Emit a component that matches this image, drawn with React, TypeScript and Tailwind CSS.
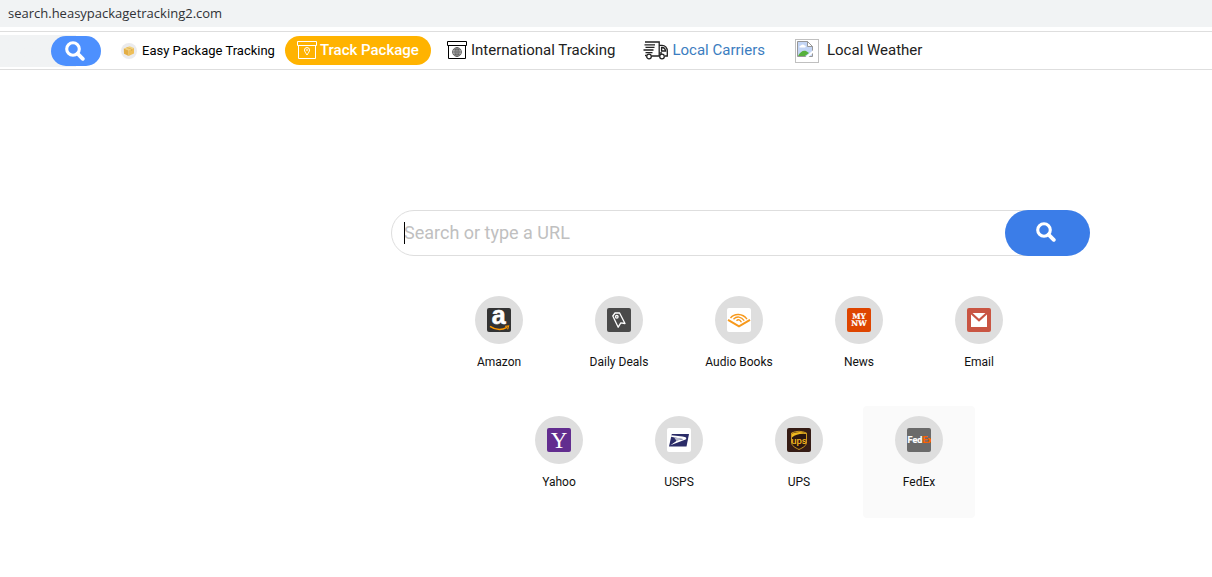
import type { ReactNode } from "react";

function SearchIcon() {
  return (
    <svg viewBox="0 0 20 20" width="20" height="20" fill="none" stroke="#fff" aria-hidden="true">
      <circle cx="8" cy="8" r="6.3" strokeWidth="3.1" />
      <path d="M12.6 12.6 L17.8 17.8" strokeWidth="3.8" strokeLinecap="round" />
    </svg>
  );
}

function BoxLogo() {
  return (
    <svg viewBox="0 0 16 16" width="16" height="16" aria-hidden="true">
      <circle cx="8" cy="8" r="8" fill="#ebebed" />
      <path d="M2.8 5.6 L8.6 3.2 L13 5 L7.6 7.4 Z" fill="#f3d27b" />
      <path d="M2.8 5.6 L7.6 7.4 V13 L3 10.8 Z" fill="#e3ae45" />
      <path d="M7.6 7.4 L13 5 V10.4 L7.6 13 Z" fill="#eebf59" />
      <path d="M5.6 4.5 L10.6 6.2 V8" stroke="#d9ab50" strokeWidth="0.7" fill="none" />
    </svg>
  );
}

function PinBox() {
  return (
    <svg viewBox="0 0 20 20" width="20" height="20" fill="none" stroke="#fff" aria-hidden="true">
      <path d="M0.5 0.5 H19.5 V4.5 H0.5 Z M1.5 4.5 V17.5 H18.5 V4.5" />
      <path d="M10 14 C8.6 11.6 7.5 10.6 7.5 9 A2.5 2.5 0 0 1 12.5 9 C12.5 10.6 11.4 11.6 10 14 Z" />
      <circle cx="10" cy="9" r="0.5" />
    </svg>
  );
}

function GlobeBox() {
  return (
    <svg viewBox="0 0 20 20" width="20" height="20" fill="none" stroke="#000" aria-hidden="true">
      <path d="M0.5 0.5 H19.5 V4.5 H0.5 Z M1.5 4.5 V17.5 H18.5 V4.5" />
      <g stroke="#555" strokeWidth="0.8">
        <circle cx="10" cy="11" r="4.5" fill="#ccc" />
        <ellipse cx="10" cy="11" rx="2" ry="4.5" />
        <path d="M10 6.5 V15.5 M5.5 11 H14.5 M6.2 8.8 H13.8 M6.2 13.2 H13.8" />
      </g>
    </svg>
  );
}

function Truck() {
  return (
    <svg viewBox="0 0 26 20" width="26" height="20" fill="none" stroke="#222" strokeWidth="1.3" aria-hidden="true">
      <path d="M2 1 H16.2 V15 M1.5 3.8 H12 M2.5 6.4 H11.5 M0.5 9 H10.5 M2.5 11.6 H9.5" />
      <path d="M2 14.5 H3.5 M8.5 15 H16 M22 15 H24.3 V10 C24.3 6.5 22 4.3 19 4.3 H16.2" />
      <path d="M18.6 6.5 C20.8 6.3 22.2 7.6 22.6 10 H18.6 Z M16.5 12 H19" />
      <circle cx="6" cy="15.5" r="2.3" />
      <circle cx="19" cy="15.5" r="2.3" />
    </svg>
  );
}

function BrokenImage() {
  return (
    <svg viewBox="0 0 24 24" width="24" height="24" role="img" aria-label="Missing image">
      <rect x="0.5" y="0.5" width="23" height="23" fill="#fff" stroke="#c0c0c0" />
      <path d="M2.5 2.5 H12.5 L17.5 7.5 V17.5 H2.5 Z" fill="#c3d5f5" stroke="#979797" />
      <path d="M12.5 2.5 V7.5 H17.5 Z" fill="#fff" stroke="#979797" />
      <path d="M4.5 8.5 a1.5 1.5 0 0 1 1.5 -2 a2 2 0 0 1 3.5 0 a1 1 0 0 1 0.5 2 Z" fill="#fff" />
      <path d="M3 17 C5 13 8 11 11 12 L14 14 L10 17 Z" fill="#56b03c" />
      <path d="M9.8 18.5 L18.5 10.8 V13.5 L13 18.5 Z" fill="#fff" />
    </svg>
  );
}

const amazon = (
  <svg viewBox="0 0 24 24" width="24" height="24" className="overflow-visible" aria-hidden="true">
    <rect width="24" height="24" rx="2" fill="#333" />
    <text x="11.8" y="16.3" textAnchor="middle" fontFamily="Liberation Sans, sans-serif" fontWeight="700" fontSize="25" fill="#fff" stroke="#fff" strokeWidth="0.6">a</text>
    <path d="M3 18.3 Q11.5 24 20 19.3" fill="none" stroke="#f90" strokeWidth="1.5" />
    <path d="M18.2 18.4 L21.6 18 L20.6 21.3" fill="none" stroke="#f90" strokeWidth="1.1" />
  </svg>
);

const deals = (
  <svg viewBox="0 0 24 24" width="24" height="24" fill="none" stroke="#fff" strokeWidth="1.3" aria-hidden="true">
    <rect width="24" height="24" rx="2" fill="#4a4a4a" stroke="none" />
    <path d="M5.8 8 L8 5 L12.6 5 L18 15.5 L13.8 14.8 L11.2 19.2 Z" strokeLinejoin="round" />
    <circle cx="9.8" cy="8.8" r="1.3" />
  </svg>
);

const audio = (
  <svg viewBox="0 0 24 24" width="24" height="24" fill="none" stroke="#f7991c" aria-hidden="true">
    <rect width="24" height="24" rx="2" fill="#fff" stroke="none" />
    <path d="M1 11.8 L12 18.4 L23 11.8" strokeWidth="2" />
    <path d="M3.5 10 C7.5 5.2 15.5 5.2 20 11.2" strokeWidth="1.4" />
    <path d="M6.5 11.2 C9.8 7.7 14.3 8.6 17.2 12.6" strokeWidth="1.4" />
    <path d="M9.5 12.7 C11.2 11 13.2 11.7 14.4 14.2" strokeWidth="1.4" />
  </svg>
);

const news = (
  <svg viewBox="0 0 24 24" width="24" height="24" aria-hidden="true">
    <rect width="24" height="24" rx="2" fill="#de4500" />
    <g fontFamily="DejaVu Serif, serif" fontWeight="700" fontSize="7.5" fill="#fff" stroke="#fff" strokeWidth="0.2" textAnchor="middle">
      <text x="12" y="11.4">MY</text>
      <text x="12" y="18.2">NW</text>
    </g>
  </svg>
);

const email = (
  <svg viewBox="0 0 24 24" width="24" height="24" aria-hidden="true">
    <rect width="24" height="24" rx="2" fill="#c95543" />
    <path d="M4 5 H20 V19 H4 Z" fill="#fff" />
    <path d="M4 5 L12 12.2 L20 5" fill="none" stroke="#c95543" strokeWidth="2.2" />
  </svg>
);

const yahoo = (
  <svg viewBox="0 0 24 24" width="24" height="24" className="overflow-visible" aria-hidden="true">
    <rect width="24" height="24" rx="2" fill="#622d8f" />
    <text x="12" y="19.6" textAnchor="middle" fontFamily="Liberation Serif, serif" fontSize="23" fill="#fff">Y</text>
  </svg>
);

const usps = (
  <svg viewBox="0 0 24 24" width="24" height="24" aria-hidden="true">
    <rect width="24" height="24" rx="2" fill="#fff" />
    <path d="M4.8 6 H22 L19.5 18.4 H2 Z" fill="#2b2c68" />
    <path d="M4.4 7.3 L15.5 8.6 C19 9 20.2 10.2 18.6 11.5 L3.4 17.2 L10.5 12.3 L16.4 11.2 L4 8.8 Z" fill="#fff" />
    <path d="M7 9.2 L16 10.8 L9.5 12.9 Z" fill="#b9bbce" />
  </svg>
);

const ups = (
  <svg viewBox="0 0 24 24" width="24" height="24" aria-hidden="true">
    <rect width="24" height="24" rx="2" fill="#351c15" />
    <path d="M4.5 5 Q12 1.6 19.5 5 V14 C19.5 18 16 19.5 12 21.5 C8 19.5 4.5 18 4.5 14 Z" fill="#2a1610" stroke="#c9951f" />
    <path d="M5 5.6 Q12 2.4 19 5.2 V6 Q10 5.2 5 9.4 Z" fill="#efb81f" />
    <text x="12" y="15.8" textAnchor="middle" fontFamily="Roboto, sans-serif" fontWeight="500" fontSize="9.5" fill="#f2b71c">ups</text>
  </svg>
);

const fedex = (
  <svg viewBox="0 0 24 24" width="24" height="24" aria-hidden="true">
    <rect width="24" height="24" rx="2" fill="#6a6a6a" />
    <text x="0.6" y="15.4" fontFamily="Roboto, sans-serif" fontWeight="700" fontSize="9" fill="#fff" stroke="#fff" strokeWidth="0.2">
      Fed<tspan fill="#ff6200" stroke="#ff6200">Ex</tspan>
    </text>
  </svg>
);

type Site = { name: string; icon: ReactNode; active?: boolean };

const rows: Site[][] = [
  [
    { name: "Amazon", icon: amazon },
    { name: "Daily Deals", icon: deals },
    { name: "Audio Books", icon: audio },
    { name: "News", icon: news },
    { name: "Email", icon: email },
  ],
  [
    { name: "Yahoo", icon: yahoo },
    { name: "USPS", icon: usps },
    { name: "UPS", icon: ups },
    { name: "FedEx", icon: fedex, active: true },
  ],
];

function Tile({ name, icon, active }: Site) {
  return (
    <a
      href="#"
      className={`flex h-28 w-28 flex-col items-center rounded pt-[10px] text-xs text-[#111] hover:bg-[#fafafa] ${active ? "bg-[#fafafa]" : ""}`}
    >
      <span className="flex h-12 w-12 items-center justify-center rounded-full bg-[#dedede]">{icon}</span>
      <span className="mt-[10px]">{name}</span>
    </a>
  );
}

export default function App() {
  return (
    <div className="min-h-screen bg-white font-['Roboto',sans-serif]">
      {/* Address bar */}
      <div className="mb-1 h-[27px] bg-[#f1f3f4] px-2 font-['Open_Sans',sans-serif] text-[13px] leading-[27px] text-[#303236]">
        search.heasypackagetracking2.com
      </div>

      {/* Toolbar */}
      <nav className="flex h-[39px] items-center border-y border-[#dedede] text-[15px] text-[#212121]">
        <div className="flex h-8 w-[101px] shrink-0 items-center justify-end bg-linear-to-r from-[#f1f3f4] from-75% to-white to-75%">
          <button type="button" aria-label="Search" className="flex h-[30px] w-[50px] items-center justify-center rounded-full bg-[#4d90fe] pr-[2px]">
            <SearchIcon />
          </button>
        </div>
        <a href="#" className="ml-5 flex items-center gap-[5px] text-[13px] text-black">
          <BoxLogo />
          Easy Package Tracking
        </a>
        <a href="#" className="ml-[10px] flex h-[29px] items-center gap-[3px] rounded-full bg-[#ffb300] px-3 font-medium text-white">
          <PinBox />
          Track Package
        </a>
        <a href="#" className="ml-4 flex items-center gap-1">
          <GlobeBox />
          International Tracking
        </a>
        <a href="#" className="ml-7 flex items-center gap-[3px] text-[#3b7dc0]">
          <Truck />
          Local Carriers
        </a>
        <a href="#" className="ml-[30px] flex items-center gap-2">
          <BrokenImage />
          Local Weather
        </a>
      </nav>

      {/* Page content */}
      <main className="flex flex-col items-center pt-[140px] pl-[266px]">
        <div className="w-full pl-[3px]">
          <form className="relative mx-auto flex h-[46px] max-w-[699px]" onSubmit={(e) => e.preventDefault()}>
            <input
              type="text"
              aria-label="Search or type a URL"
              placeholder="Search or type a URL"
              className="-mr-7 min-w-0 flex-1 rounded-l-full border border-[#dedede] bg-white pr-10 pl-3 text-lg text-[#212121] outline-none placeholder:text-[#c0c0c0]"
            />
            <span className="absolute top-3 left-[13px] h-[22px] w-px bg-black" />
            <button type="submit" aria-label="Search" className="relative flex w-[85px] items-center justify-center rounded-full bg-[#3b7de8] pr-1 pb-[2px]">
              <SearchIcon />
            </button>
          </form>
        </div>

        <div className="mt-[30px] flex flex-col gap-2">
          {rows.map((row) => (
            <div key={row[0].name} className="flex justify-center gap-2">
              {row.map((site) => (
                <Tile key={site.name} {...site} />
              ))}
            </div>
          ))}
        </div>
      </main>
    </div>
  );
}
